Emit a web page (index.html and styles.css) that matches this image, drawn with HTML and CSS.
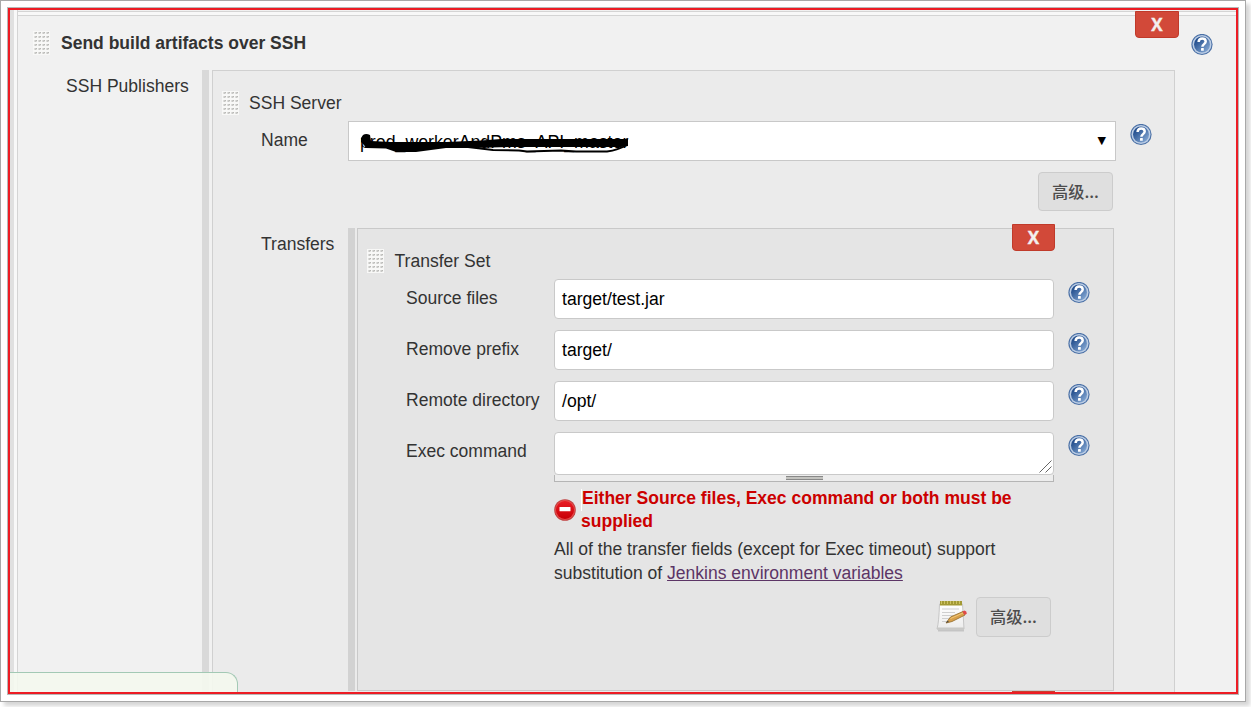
FILE: index.html
```html
<!DOCTYPE html>
<html lang="en">
<head>
<meta charset="utf-8">
<title>Send build artifacts over SSH</title>
<link rel="stylesheet" href="styles.css">
</head>
<body>
<svg width="0" height="0" class="defs">
  <defs>
    <linearGradient id="blue" x1="0" y1="0" x2="1" y2="1"><stop offset="0.2" stop-color="#25508f"/><stop offset="1" stop-color="#91b3dc"/></linearGradient>
    <linearGradient id="red" x1="0" y1="0" x2="0" y2="1"><stop offset="0" stop-color="#e81c24"/><stop offset="1" stop-color="#c80007"/></linearGradient>
    <linearGradient id="paper" x1="0" y1="0" x2="0" y2="1"><stop offset="0" stop-color="#fff"/><stop offset="1" stop-color="#ececec"/></linearGradient>
    <symbol id="help" viewBox="0 0 22 22">
      <circle cx="11" cy="10.5" r="10.6" fill="#4a70a6"/>
      <circle cx="11" cy="10.5" r="9.5" fill="#bccde4"/>
      <circle cx="11" cy="10.5" r="8" fill="url(#blue)"/>
      <path d="M7.600 8C7.800 5.300 9.200 4.600 11.200 4.600c2.100 0 3.500 1.100 3.500 3 0 2.500-3.300 2.600-3.300 5.200" fill="none" stroke="#fff" stroke-width="2.500"/>
      <rect x="10" y="14.100" width="2.800" height="2.700" rx=".5" fill="#fff"/>
    </symbol>
    <pattern id="dots" width="4" height="4" patternUnits="userSpaceOnUse">
      <rect width="4" height="4" fill="#f8f8f7"/><rect x="1" y="1" width="3" height="2" fill="#dededc"/><rect x="2" y="1" width="1" height="2" fill="#c8c8c6"/><rect x="3" y="1" width="1" height="1" fill="#b8b8b5"/>
    </pattern>
    <symbol id="grip" viewBox="0 0 17 24"><rect width="17" height="24" fill="url(#dots)"/></symbol>
  </defs>
</svg>
<div class="frame">
 <div class="viewport">
  <div class="strip"></div>
  <div class="main">
   <div class="previous"></div>
   <section class="step">
    <header class="step-head">
      <svg class="grip"><use href="#grip"/></svg>
      <h1>Send build artifacts over SSH</h1>
      <svg class="help"><use href="#help"/></svg>
    </header>
    <button class="remove">X</button>
    <div class="step-body">
      <div class="side-label">SSH Publishers</div>
      <div class="bar"></div>
      <section class="server">
        <header class="set-head"><svg class="grip"><use href="#grip"/></svg><span>SSH Server</span></header>
        <div class="row">
          <label class="name-label">Name</label>
          <div class="select"><span>prod_workerAndPms_API_master</span><i>▼</i>
            <svg class="scribble" viewBox="0 0 270 24"><path d="M0 5L2 2Q5 0 9 2L10 8 30 9 85 9 120 7.500 140 6 267 6V13L260 14H150L110 15 85 15 55 19 35 19 25 15.500 5 15 3 12 0 9Z"/><path d="M107 14L132 17 158 17.500 166 18.500 200 17.500 215 18.500H246Q257 17 266 12" fill="none" stroke="#000" stroke-width="2"/></svg>
          </div>
          <svg class="help"><use href="#help"/></svg>
        </div>
        <div class="actions"><button class="advanced">高级...</button></div>
        <div class="transfers">
          <div class="transfers-label">Transfers</div>
          <div class="bar inner"></div>
          <section class="transfer">
            <button class="remove small">X</button>
            <header class="set-head"><svg class="grip"><use href="#grip"/></svg><span>Transfer Set</span></header>
            <div class="row field"><label>Source files</label><div class="input">target/test.jar</div><svg class="help"><use href="#help"/></svg></div>
            <div class="row field"><label>Remove prefix</label><div class="input">target/</div><svg class="help"><use href="#help"/></svg></div>
            <div class="row field"><label>Remote directory</label><div class="input">/opt/</div><svg class="help"><use href="#help"/></svg></div>
            <div class="row field command"><label>Exec command</label>
              <div class="area-wrap">
                <div class="input area"><svg class="corner" viewBox="0 0 13 13"><path d="M.5 12.500l12-12M6.500 12.500l6-6" stroke="#666" fill="none"/></svg></div>
                <div class="drag"><b></b></div>
              </div>
              <svg class="help"><use href="#help"/></svg></div>
            <div class="notes">
              <div class="error">
                <svg class="stop" viewBox="0 0 22 22"><circle cx="11" cy="11" r="10.800" fill="#c04040"/><circle cx="11" cy="11" r="9.900" fill="#e84a4a"/><circle cx="11" cy="11" r="9" fill="url(#red)"/><rect x="5.500" y="8" width="11" height="4.300" rx=".6" fill="#fff"/></svg>
                <p><u class="tick"></u>Either Source files, Exec command or both must be<br>supplied</p>
              </div>
              <p class="info">All of the transfer fields (except for Exec timeout) support<br>substitution of <a>Jenkins environment variables</a></p>
              <div class="foot">
                <svg class="notepad" viewBox="0 0 32 32">
                  <path d="M2 30.500h26" stroke="#c4c4c4" stroke-width="2"/>
                  <path d="M3.500 4h23l1.500 25H1Q3 22 3.500 4z" fill="url(#paper)" stroke="#bbb" stroke-width=".8"/>
                  <path d="M1.300 27.500h26.500l.3 2H1z" fill="#c8c8c6"/>
                  <rect x="4" y="1" width="22" height="4.500" fill="#a39a35"/>
                  <path d="M5.500 1v3m3-3v3m3-3v3m3-3v3m3-3v3m3-3v3m3-3v3" stroke="#cdc263" stroke-width="1"/>
                  <path d="M6 9h17M6 12.500h13M6 15.500h11M6 18.500h8M6 21.500h5" stroke="#cfcfcf" stroke-width="1"/>
                  <path d="M10 23l4.500-6L27 11.500l2 3.500-13 6.500z" fill="#d8a04a" stroke="#9a7434" stroke-width=".9"/>
                  <path d="M14.500 18.500L27 13" stroke="#f2c878" stroke-width="1"/>
                  <path d="M26.500 11.500l2-.9q2.400.6 2.300 3.200l-2.200 1.200z" fill="#e0484a"/><path d="M10 23l1.500-2.200 1.500 1z" fill="#444"/>
                </svg>
                <button class="advanced tall">高级...</button>
              </div>
            </div>
          </section>
        </div>
        <div class="next-remove"></div>
      </section>
    </div>
   </section>
  </div>
  <div class="toast"></div>
 </div>
</div>
</body>
</html>
```
FILE: styles.css
```css
* { box-sizing: border-box; }
body { margin: 0; width: 1251px; height: 707px; overflow: hidden; background: #fff; color: #333; font: 17.55px/24px "Liberation Sans", "Noto Sans CJK SC", sans-serif; }
.defs { position: absolute; }
h1, p { margin: 0; }
svg { display: block; flex: none; }
.frame { width: 1246px; height: 702px; padding: 6px; border: 1px solid #a8a8a8; background: #fff; box-shadow: 4px 4px 4px #d6d6d6; }
.viewport { position: relative; display: flex; width: 1230px; height: 686px; margin: 1px; overflow: hidden; border: 2px solid #ed1c24; outline: 1px solid #b8b8b8; background: #f8f8f8; }
.strip { width: 4px; margin-right: 3px; background: #e0e0e0; }
.main { width: 1219px; flex: none; border-left: 1px solid #d4d4d4; }
.previous { height: 5px; border-top: 1px solid #f1f1f1; background: linear-gradient(#d4d4d4 1px, #f8f8f8 1px); }
.step { position: relative; border-top: 1px solid #d4d4d4; background: #f1f1f1; height: 690px; }
.step-head { display: flex; height: 54px; padding-left: 15px; }
.grip { width: 17px; height: 24px; }
.step-head .grip { margin-top: 15px; }
h1 { flex: none; width: 1141px; padding: 15px 0 0 11px; font-size: 17.5px; line-height: 24px; }
.step-head .help { margin-top: 18px; }
.help { width: 22px; height: 22px; }
.remove { position: absolute; left: 1117px; top: -5px; width: 44px; height: 27px; padding: 0; border: 1px solid #c03a2a; border-radius: 0 0 4px 4px; background: #d24939; color: #f3f0ef; font: bold 17px/26px "Open Sans", sans-serif; -webkit-text-stroke: .4px #f3f0ef; }
.remove.small { left: 654px; top: -5px; width: 43px; }
.step-body { display: flex; }
.side-label { width: 184px; padding: 4px 0 0 48px; }
.bar { width: 7px; margin-right: 3px; background: #d9d9d9; }
.bar.inner { margin-right: 2px; background: #d2d2d2; }
.server { width: 963px; height: 640px; border: 1px solid #d0d0d0; background: #ebebeb; }
.set-head { display: flex; height: 50px; padding: 20px 0 0 9px; }
.set-head span { margin-left: 10px; }
.transfer .set-head span { margin-left: 10.5px; }
.row { display: flex; }
.name-label { width: 135px; padding: 7px 0 0 48px; }
.select { position: relative; display: flex; justify-content: space-between; width: 768px; height: 40px; padding: 8px 9px 0 11px; border: 1px solid #c8c8c8; background: #fff; color: #000; font-size: 17.75px; }
.select i { font: 11px/22px "DejaVu Sans", sans-serif; }
.scribble { position: absolute; left: 12px; top: 11px; width: 270px; height: 24px; }
.row .help { margin: 3px 0 0 14px; }
.row .select + .help { margin-left: 13.5px; }
.actions { display: flex; justify-content: flex-end; padding: 11px 61px 17px 0; }
.advanced { width: 75px; height: 39px; padding: 0 0 2px; border: 1px solid #ccc; border-radius: 4px; background: #dfdfdf; color: #4d4d4d; font: 500 16.2px/34px "Noto Sans CJK SC", sans-serif; }
.advanced.tall { height: 40px; }
.transfers { display: flex; height: 463px; }
.transfers-label { width: 135px; padding: 4px 0 0 48px; }
.transfer { position: relative; width: 757px; border: 1px solid #c9c9c9; background: #e5e5e5; }
.field { height: 51px; }
.field label { width: 196px; padding: 7px 0 0 48px; white-space: nowrap; }
.input { width: 500px; height: 40px; padding: 7px; border: 1px solid #c9c9c9; border-radius: 4px; background: #fff; color: #000; font-size: 17.6px; }
.area { position: relative; height: 43px; }
.corner { position: absolute; right: 1px; bottom: 1px; width: 13px; height: 13px; }
.drag { height: 7px; border: 1px solid #b5b5b5; border-top: 0; background: #ededed; padding-top: 1px; }
.drag b { display: block; width: 37px; height: 4px; margin-left: 231px; border: 1px solid #888; border-width: 1px 0; background: #c3c3bf; }
.notes { width: 693px; padding-left: 196px; padding-top: 4px; }
.error { display: flex; color: #c00; font-weight: bold; line-height: 23px; white-space: nowrap; }
.stop { width: 22px; height: 22px; margin: 12px 5px 0 0; }
.tick { display: inline-block; width: 1px; height: 22px; vertical-align: top; margin: 2px 0 -1px; background: #fff; }
.info { padding-top: 4px; white-space: nowrap; }
.info a { color: #5c3566; text-decoration: underline; }
.foot { display: flex; justify-content: flex-end; padding-top: 12px; }
.notepad { width: 32px; height: 32px; margin: 3px 8px 0 0; }
.next-remove { width: 43px; height: 2px; margin-left: 799px; background: #c8402f; }
.toast { position: absolute; left: -2px; bottom: 0; width: 230px; height: 20px; border: 1px solid #a3c9b5; border-bottom: 0; border-radius: 0 12px 0 0; background: rgba(244,248,238,.9); }
```
